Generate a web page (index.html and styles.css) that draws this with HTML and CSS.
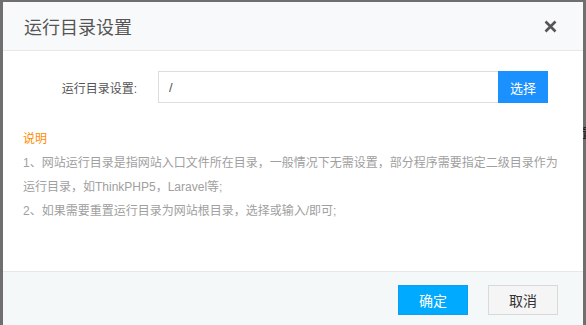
FILE: index.html
```html
<!DOCTYPE html>
<html>
<head>
    <title>运行目录设置</title>
    <meta charset="utf-8">
    <link rel="stylesheet" href="styles.css">
</head>
<body>
    <div class="backdrop-text">置</div>
    <div class="dialog">
        <div class="dialog-header">
            <div class="dialog-title">运行目录设置</div>
            <svg class="dialog-close" width="13" height="13" viewBox="0 0 13 13">
                <path d="M1.5 1.5 L11.5 11.5 M11.5 1.5 L1.5 11.5" stroke="#555" stroke-width="2.6" fill="none"/>
            </svg>
        </div>
        <div class="dialog-body">
            <div class="form-row">
                <label class="form-label">运行目录设置:</label>
                <input class="form-input" type="text" value="/">
                <button class="btn-select">选择</button>
            </div>
            <div class="notes">
                <div class="notes-title">说明</div>
                <div>1、网站运行目录是指网站入口文件所在目录，一般情况下无需设置，部分程序需要指定二级目录作为</div>
                <div>运行目录，如ThinkPHP5，Laravel等;</div>
                <div>2、如果需要重置运行目录为网站根目录，选择或输入/即可;</div>
            </div>
        </div>
        <div class="dialog-footer">
            <button class="btn btn-ok">确定</button>
            <button class="btn btn-cancel">取消</button>
        </div>
    </div>
</body>
</html>
```

FILE: styles.css
```css
html, body {
    margin: 0;
    height: 325px;
    overflow: hidden;
}
body {
    background-color: #6f6f6f;
    font-family: "Liberation Sans", "Noto Sans CJK SC", sans-serif;
    position: relative;
}
.backdrop-text {
    position: absolute;
    left: 582px;
    top: 124px;
    font-size: 12px;
    color: #111;
}
.dialog {
    position: relative;
    margin: 2px 3px 0 3px;
    width: 580px;
    height: 330px;
    background-color: #fff;
    display: flex;
    flex-direction: column;
}
.dialog-header {
    height: 48px;
    background-color: #f8f9fa;
    border-bottom: 1px solid #e8e8e8;
    display: flex;
    align-items: center;
    justify-content: space-between;
    padding: 0 26px 0 21px;
}
.dialog-title {
    font-size: 18px;
    color: #555;
}
.dialog-body {
    height: 220px;
    padding: 20px 20px 0 20px;
    box-sizing: border-box;
}
.form-row {
    display: flex;
    align-items: center;
    height: 32px;
}
.form-label {
    width: 114px;
    margin-right: 21px;
    text-align: right;
    font-size: 12px;
    color: #555;
}
.form-input {
    width: 340px;
    height: 32px;
    box-sizing: border-box;
    border: 1px solid #ddd;
    border-right: none;
    padding: 0 10px;
    font-size: 13px;
    color: #555;
    font-family: inherit;
    outline: none;
}
.btn-select {
    width: 50px;
    height: 32px;
    border: none;
    background-color: #1b90ff;
    color: #fff;
    font-size: 13px;
    font-family: inherit;
    padding: 0;
}
.notes {
    margin-top: 24px;
    font-size: 12px;
    line-height: 24px;
    color: #a0a0a0;
}
.notes-title {
    color: #ff8a00;
}
.dialog-footer {
    flex: 1;
    background-color: #f5f8f9;
    border-top: 1px solid #e6e8ea;
    display: flex;
    justify-content: flex-end;
    align-items: flex-start;
    padding: 13px 25px 0 0;
    gap: 20px;
}
.btn {
    width: 70px;
    height: 30px;
    font-size: 14px;
    font-family: inherit;
    padding: 0;
}
.btn-ok {
    background-color: #00aaff;
    border: 1px solid #0a9ff0;
    color: #fff;
}
.btn-cancel {
    background-color: #f5f5f5;
    border: 1px solid #d9d9d9;
    color: #333;
}
```
